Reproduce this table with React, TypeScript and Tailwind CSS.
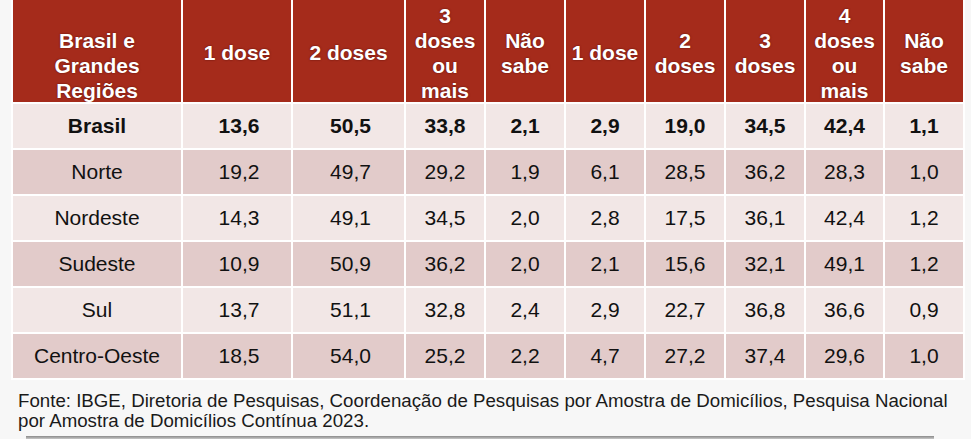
import React from "react";

const headers: string[][] = [
  ["1 dose"],
  ["2 doses"],
  ["3", "doses", "ou", "mais"],
  ["Não", "sabe"],
  ["1 dose"],
  ["2", "doses"],
  ["3", "doses"],
  ["4", "doses", "ou", "mais"],
  ["Não", "sabe"],
];

const rows: { name: string; vals: string[]; bold?: boolean }[] = [
  { name: "Brasil", vals: ["13,6", "50,5", "33,8", "2,1", "2,9", "19,0", "34,5", "42,4", "1,1"], bold: true },
  { name: "Norte", vals: ["19,2", "49,7", "29,2", "1,9", "6,1", "28,5", "36,2", "28,3", "1,0"] },
  { name: "Nordeste", vals: ["14,3", "49,1", "34,5", "2,0", "2,8", "17,5", "36,1", "42,4", "1,2"] },
  { name: "Sudeste", vals: ["10,9", "50,9", "36,2", "2,0", "2,1", "15,6", "32,1", "49,1", "1,2"] },
  { name: "Sul", vals: ["13,7", "51,1", "32,8", "2,4", "2,9", "22,7", "36,8", "36,6", "0,9"] },
  { name: "Centro-Oeste", vals: ["18,5", "54,0", "25,2", "2,2", "4,7", "27,2", "37,4", "29,6", "1,0"] },
];

export default function App() {
  return (
    <div
      className="w-[971px] h-[439px] overflow-hidden bg-[#f7f7f7] relative"
      style={{ fontFamily: '"Liberation Sans", Arial, sans-serif' }}
    >
      <div className="ml-[11px] w-[954px] bg-white px-[2px] pb-[2px]">
        <div className="grid grid-cols-[168px_108px_111px_78px_78px_78px_78px_78px_77px_78px] gap-[2px]">
          <div className="h-[102px] bg-[#a52b1b] flex items-end justify-center overflow-hidden text-white font-bold text-[21px] leading-[25px] text-center [text-shadow:0_0_2px_rgba(60,0,0,0.7)]">
            <div className="translate-y-[1px]">
              Brasil e<br />Grandes<br />Regiões
            </div>
          </div>
          {headers.map((h, i) => (
            <div
              key={i}
              className="h-[102px] bg-[#a52b1b] flex items-center justify-center pt-[3px] text-white font-bold text-[21px] leading-[25px] text-center [text-shadow:0_0_2px_rgba(60,0,0,0.7)]"
            >
              <div>
                {h.map((l, j) => (
                  <div key={j} className="whitespace-nowrap">{l}</div>
                ))}
              </div>
            </div>
          ))}
          {rows.map((r, ri) => {
            const bg = ri % 2 === 0 ? "bg-[#f2e7e6]" : "bg-[#e2cbca]";
            const weight = r.bold ? "font-bold" : "font-normal";
            return (
              <React.Fragment key={r.name}>
                <div className={`h-[44px] ${bg} ${weight} flex items-center justify-center text-[21px] text-[#111]`}>
                  {r.name}
                </div>
                {r.vals.map((v, vi) => (
                  <div
                    key={vi}
                    className={`h-[44px] ${bg} ${weight} flex items-center justify-center text-[21px] text-[#111] ${vi === 0 || vi === 1 ? "pl-[4px]" : ""}`}
                  >
                    {v}
                  </div>
                ))}
              </React.Fragment>
            );
          })}
        </div>
      </div>
      <div className="ml-[18px] mt-[11px] text-[18.7px] leading-[20px] text-[#1a1a1a]">
        <div className="whitespace-nowrap">
          Fonte: IBGE, Diretoria de Pesquisas, Coordenação de Pesquisas por Amostra de Domicílios, Pesquisa Nacional
        </div>
        <div className="whitespace-nowrap">por Amostra de Domicílios Contínua 2023.</div>
      </div>
      <div className="absolute left-[26px] top-[436px] w-[908px] h-[3px] bg-gradient-to-b from-[#8a8a8a] to-[#c8c8c8]" />
    </div>
  );
}
